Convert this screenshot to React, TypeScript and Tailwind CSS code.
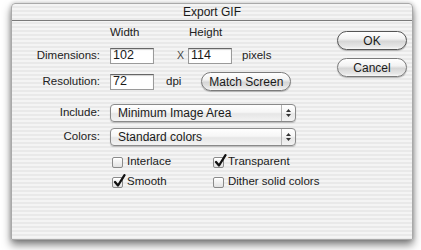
import React from "react";

const font = { fontFamily: '"Liberation Sans", Arial, sans-serif' };

function AquaButton({ label, w, def }: { label: string; w: string; def?: boolean }) {
  return (
    <div
      className={`${w} h-[19px] rounded-full border ${def ? "border-[#555]" : "border-[#7a7a7a]"} bg-[linear-gradient(to_bottom,#ffffff_0%,#f2f2f2_40%,#d6d6d6_55%,#e6e6e6_85%,#f7f7f7_100%)] shadow-[0_1px_1px_rgba(0,0,0,0.25)] flex items-center justify-center text-[12px] text-[#1a1a1a]`}
    >
      {label}
    </div>
  );
}

function TextBox({ value }: { value: string }) {
  return (
    <div className="w-[44px] h-[16px] bg-white border border-[#9a9a9a] border-t-[#666] shadow-[inset_0_1px_1px_rgba(0,0,0,0.18)] pl-[2px] flex items-center text-[12.5px] text-[#1a1a1a] leading-none">
      {value}
    </div>
  );
}

function Select({ value }: { value: string }) {
  return (
    <div className="w-[186px] h-[18px] rounded-[4px] border border-[#8a8a8a] bg-[linear-gradient(to_bottom,#ffffff_0%,#f6f6f6_45%,#e6e6e6_55%,#f3f3f3_100%)] shadow-[0_1px_1px_rgba(0,0,0,0.2)] flex items-center">
      <div className="flex-1 pl-[7px] text-[12px] text-[#1a1a1a] leading-none">{value}</div>
      <div className="w-[14px] h-full border-l border-[#b4b4b4] flex flex-col items-center justify-center gap-[2px]">
        <svg width="5" height="3" viewBox="0 0 5 3"><path d="M2.5 0 L5 3 L0 3 Z" fill="#333" /></svg>
        <svg width="5" height="3" viewBox="0 0 5 3"><path d="M0 0 L5 0 L2.5 3 Z" fill="#333" /></svg>
      </div>
    </div>
  );
}

function Check({ label, checked }: { label: string; checked?: boolean }) {
  return (
    <div className="flex items-center h-[16px]">
      <div className="relative ml-[2px] w-[11px] h-[11px] rounded-[2px] border border-[#8a8a8a] bg-[linear-gradient(to_bottom,#ffffff,#e2e2e2)] shadow-[inset_0_1px_0_rgba(255,255,255,0.9)]">
        {checked && (
          <svg className="absolute left-[0px] top-[-4px]" width="13" height="14" viewBox="0 0 13 14">
            <path d="M2 8 L5 11.5 L11.5 1.2" fill="none" stroke="#111" strokeWidth="2.3" strokeLinecap="round" strokeLinejoin="round" />
          </svg>
        )}
      </div>
      <span className="ml-[4px] text-[11.5px] text-[#1a1a1a] leading-none">{label}</span>
    </div>
  );
}

const stripes =
  "bg-[repeating-linear-gradient(to_bottom,#f4f4f4_0px,#f4f4f4_2px,#e9e9e9_2px,#e9e9e9_4px)]";

export default function App() {
  return (
    <div className="w-[421px] h-[250px] bg-white overflow-hidden" style={font}>
      <div className="pt-[3px] pl-[11px]">
        <div
          className={`w-[402px] h-[237px] border border-[#a9a9a9] rounded-t-[4px] ${stripes} shadow-[0_5px_9px_rgba(0,0,0,0.5),0_0_4px_rgba(0,0,0,0.2)] flex flex-col`}
        >
          <div className="h-[17px] border-b border-[#7a7a7a] flex items-center justify-center text-[12px] text-[#1a1a1a] leading-none">
            Export GIF
          </div>
          <div className="flex flex-1">
            <div className="flex-1 flex flex-col text-[11.5px] text-[#222]">
              <div className="mt-[5px] h-[14px] flex items-center">
                <div className="w-[98px]" />
                <div className="w-[79px]">Width</div>
                <div>Height</div>
              </div>
              <div className="mt-[6px] h-[19px] flex items-center">
                <div className="w-[88px] text-right">Dimensions:</div>
                <div className="ml-[10px]"><TextBox value="102" /></div>
                <div className="ml-[23px] w-[11px] text-[10.5px] text-[#444]">X</div>
                <TextBox value="114" />
                <div className="ml-[10px]">pixels</div>
              </div>
              <div className="mt-[7px] h-[19px] flex items-center">
                <div className="w-[88px] text-right">Resolution:</div>
                <div className="ml-[10px]"><TextBox value="72" /></div>
                <div className="ml-[12px]">dpi</div>
                <div className="ml-[20px]"><AquaButton label="Match Screen" w="w-[90px]" /></div>
              </div>
              <div className="mt-[12px] h-[19px] flex items-center">
                <div className="w-[88px] text-right">Include:</div>
                <div className="ml-[10px]"><Select value="Minimum Image Area" /></div>
              </div>
              <div className="mt-[5px] h-[19px] flex items-center">
                <div className="w-[88px] text-right">Colors:</div>
                <div className="ml-[10px]"><Select value="Standard colors" /></div>
              </div>
              <div className="mt-[8px] flex">
                <div className="w-[98px]" />
                <div className="flex flex-col gap-[4px]">
                  <div className="flex">
                    <div className="w-[101px]"><Check label="Interlace" /></div>
                    <Check label="Transparent" checked />
                  </div>
                  <div className="flex">
                    <div className="w-[101px]"><Check label="Smooth" checked /></div>
                    <Check label="Dither solid colors" />
                  </div>
                </div>
              </div>
            </div>
            <div className="pt-[10px] pr-[5px] flex flex-col gap-[8px]">
              <AquaButton label="OK" w="w-[70px]" def />
              <AquaButton label="Cancel" w="w-[70px]" />
            </div>
          </div>
        </div>
      </div>
    </div>
  );
}
